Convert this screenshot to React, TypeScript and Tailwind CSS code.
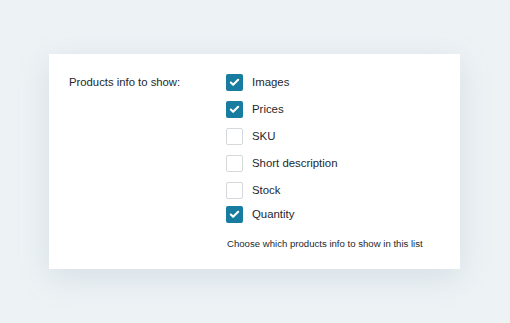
import { Check } from "lucide-react";

const items = [
  { label: "Images", checked: true },
  { label: "Prices", checked: true },
  { label: "SKU", checked: false },
  { label: "Short description", checked: false },
  { label: "Stock", checked: false },
  { label: "Quantity", checked: true },
];

export default function App() {
  return (
    <div className="w-[510px] h-[323px] bg-[#edf2f5] pt-[54px] pl-[49px] font-['Liberation_Sans',Arial,sans-serif] text-[#23282d]">
      <div className="w-[411px] h-[215px] bg-white shadow-[0_8px_30px_rgba(120,150,175,0.2)] flex pt-[20px] pl-[20px]">
        <div className="w-[157px] text-[11.3px] leading-[13px] pt-[2px]">Products info to show:</div>
        <div className="flex flex-col">
          {items.map((it, i) => (
            <div
              key={it.label}
              className={`flex items-center gap-[9px] h-[17px] ${i === 0 ? "" : i === 5 ? "mt-[7px]" : "mt-[10px]"}`}
            >
              {it.checked ? (
                <span className="w-[17px] h-[17px] rounded-[2px] bg-[#177c9f] flex items-center justify-center">
                  <Check size={11} strokeWidth={4.5} className="text-white" />
                </span>
              ) : (
                <span className="w-[17px] h-[17px] rounded-[2px] border border-[#d5d8db] bg-white" />
              )}
              <span className="text-[11.4px] leading-none">{it.label}</span>
            </div>
          ))}
          <div className="text-[9.6px] leading-[11px] mt-[15px] pl-[1px]">Choose which products info to show in this list</div>
        </div>
      </div>
    </div>
  );
}
